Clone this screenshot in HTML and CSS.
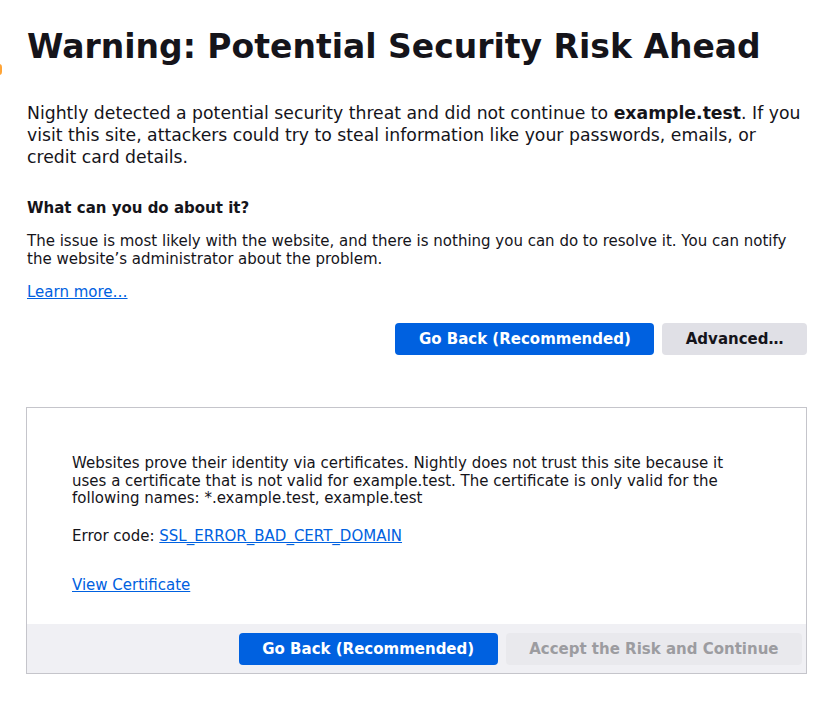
FILE: index.html
```html
<!DOCTYPE html>
<html lang="en">
<head>
<meta charset="utf-8">
<title>Warning: Potential Security Risk Ahead</title>
<link rel="stylesheet" href="styles.css">
</head>
<body>
<div class="warn-icon"></div>
<main class="container">
  <h1 class="title">Warning: Potential Security Risk Ahead</h1>
  <p class="intro">Nightly detected a potential security threat and did not continue to <strong>example.test</strong>. If you visit this site, attackers could try to steal information like your passwords, emails, or credit card details.</p>
  <h2 class="subhead">What can you do about it?</h2>
  <p class="desc">The issue is most likely with the website, and there is nothing you can do to resolve it. You can notify the website’s administrator about the problem.</p>
  <p class="learn"><a href="#">Learn more…</a></p>
  <div class="actions">
    <button class="btn primary">Go Back (Recommended)</button>
    <button class="btn secondary">Advanced…</button>
  </div>
  <section class="advanced">
    <div class="adv-body">
      <p class="adv-text">Websites prove their identity via certificates. Nightly does not trust this site because it uses a certificate that is not valid for example.test. The certificate is only valid for the following names: *.example.test, example.test</p>
      <p class="adv-code">Error code: <a href="#">SSL_ERROR_BAD_CERT_DOMAIN</a></p>
      <p class="adv-view"><a href="#">View Certificate</a></p>
    </div>
    <div class="adv-bar">
      <button class="btn primary">Go Back (Recommended)</button>
      <button class="btn disabled">Accept the Risk and Continue</button>
    </div>
  </section>
</main>
</body>
</html>
```
FILE: styles.css
```css
html, body {
  margin: 0;
  padding: 0;
  background: #ffffff;
}
body {
  font-family: "DejaVu Sans", "Noto Sans", sans-serif;
  font-size: 15px;
  color: #15141a;
  position: relative;
}
.warn-icon {
  position: absolute;
  left: -14px;
  top: 64px;
  width: 16px;
  height: 11px;
  background: #ffa436;
  border-radius: 3px;
}
.container {
  width: 781px;
  margin-left: 26px;
  padding-top: 26px;
}
.title {
  margin: 0;
  font-size: 33px;
  line-height: 42px;
  font-weight: 700;
  padding-left: 1px;
}
.intro {
  margin: 34px 0 0 1px;
  font-size: 17.25px;
  line-height: 22px;
}
.intro strong { font-weight: 700; }
.subhead {
  margin: 31px 0 0 1px;
  font-size: 15px;
  line-height: 18px;
  font-weight: 700;
}
.desc {
  margin: 15px 0 0 1px;
  line-height: 18px;
}
.learn {
  margin: 15px 0 0 1px;
  line-height: 18px;
}
a {
  color: #0061e0;
  text-decoration: underline;
}
.actions {
  display: flex;
  justify-content: flex-end;
  gap: 8px;
  margin-top: 22px;
}
.btn {
  font-family: "DejaVu Sans", "Noto Sans", sans-serif;
  font-size: 15px;
  font-weight: 700;
  height: 32px;
  border: none;
  border-radius: 4px;
  padding: 0 23.5px;
  margin: 0;
}
.primary {
  background: #0061e0;
  color: #ffffff;
}
.secondary {
  background: #e0e0e6;
  color: #15141a;
}
.disabled {
  background: #e9e9ed;
  color: #9c9ca0;
}
.advanced {
  margin-top: 52px;
  border: 1px solid #c5c5cb;
  background: #ffffff;
}
.adv-body {
  padding: 47px 44px 29px 45px;
}
.adv-text {
  margin: 0;
  line-height: 17.5px;
}
.adv-code {
  margin: 20px 0 0;
  line-height: 17.5px;
}
.adv-view {
  margin: 32px 0 0;
  line-height: 17.5px;
}
.adv-bar {
  background: #f0f0f4;
  display: flex;
  justify-content: flex-end;
  gap: 8px;
  padding: 9px 4px 8px;
}
```
